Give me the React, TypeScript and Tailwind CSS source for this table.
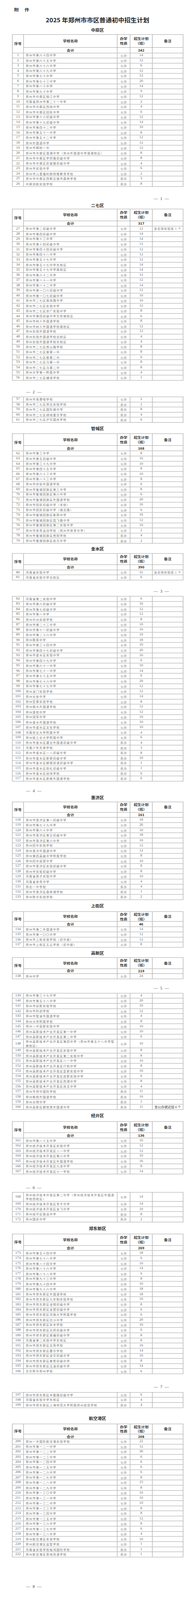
import React, { useLayoutEffect, useState } from "react";

type R = [number, string, string, string, string?];

const zy: R[] = [
  [1, "郑州市第六十四中学", "公办", "14"],
  [2, "郑州市第六十五中学", "公办", "12"],
  [3, "郑州市第六十六中学", "公办", "6"],
  [4, "郑州市第六十九中学", "公办", "12"],
  [5, "郑州市第七十中学", "公办", "12"],
  [6, "郑州市第七十三中学", "公办", "20"],
  [7, "郑州市第八十中学", "公办", "14"],
  [8, "郑州市第九十中学", "公办", "9"],
  [9, "郑州市中原区锦江中学", "公办", "12"],
  [10, "河南省郑州市第二十一中学", "公办", "2"],
  [11, "郑州市中原区西岗中学", "公办", "4"],
  [12, "郑州市中原区回民中学", "公办", "6"],
  [13, "郑州市第十六初级中学", "公办", "12"],
  [14, "郑州市第十九初级中学", "公办", "14"],
  [15, "郑州市第四十二中学", "公办", "10"],
  [16, "郑州市第五十一中学", "公办", "8"],
  [17, "郑州市第五十二中学", "公办", "12"],
  [18, "郑州外国语中学", "公办", "12"],
  [19, "郑州市桐柏一中", "公办", "12"],
  [20, "郑州市中原区莲湖中学（郑州外国语中学莲湖校区）", "公办", "8"],
  [21, "郑州市中原区学府路初级中学", "公办", "8"],
  [22, "郑州市中原区凯旋路初级中学", "公办", "4"],
  [23, "郑州市实验中学", "公办", "6"],
  [24, "郑州市儿童福利院特殊教育学校", "公办", "2"],
  [25, "郑州市中原区西斯达城市森林学校", "民办", "3"],
  [26, "中原领航实验学校", "民办", "8"],
];

const eq: R[] = [
  [27, "郑州市第二初级中学", "公办", "12", "含足球实验班 1 个"],
  [28, "郑州市第四初级中学", "公办", "14"],
  [29, "郑州市第十三中学", "公办", "14"],
  [30, "郑州市第十四初级中学", "公办", "12"],
  [31, "郑州市第四十四初级中学", "公办", "12"],
  [32, "郑州市第四十八中学", "公办", "12"],
  [33, "郑州市第五十七中学", "公办", "12"],
  [34, "郑州市第五十七中学东校区", "公办", "14"],
  [35, "郑州市第五十七中学南校区", "公办", "14"],
  [36, "郑州市第六十二中学", "公办", "12"],
  [37, "郑州市第八十一中学", "公办", "12"],
  [38, "郑州市第八十二中学", "公办", "14"],
  [39, "郑州市第一〇六初级中学", "公办", "12"],
  [40, "郑州市第一〇七初级中学", "公办", "10"],
  [41, "郑州市二七区南岗路中学", "公办", "10"],
  [42, "郑州市二七区实验中学", "公办", "12"],
  [43, "郑州市二七区京广实验中学", "公办", "8"],
  [44, "郑州市第四初级中学华侨城校区", "公办", "6"],
  [45, "郑州市树人外国语学校", "公办", "8"],
  [46, "郑州市树人外国语学校南校区", "公办", "12"],
  [47, "郑州实验外国语学校", "公办", "12"],
  [48, "郑州实验外国语学校北校区", "公办", "4"],
  [49, "郑州实验外国语学校东校区", "公办", "4"],
  [50, "郑州市二七区嵩山路学校", "公办", "8"],
  [51, "郑州市二七区侯寨一中", "公办", "8"],
  [52, "郑州市二七区侯寨二中", "公办", "6"],
  [53, "郑州市二七区马寨一中", "公办", "8"],
  [54, "郑州市二七区马寨二中", "公办", "8"],
  [55, "郑州大学第一附属中学", "公办", "4"],
  [56, "郑州市二七区辅读学校", "公办", "1"],
];

const eq2: R[] = [
  [57, "郑州市盲聋哑学校", "公办", "2"],
  [58, "郑州市二七区郑达实验学校", "民办", "2"],
  [59, "郑州市二七区国际城中学", "民办", "8"],
  [60, "郑州市二七区绿地爱华学校", "民办", "4"],
  [61, "郑州市二七区沪华国庆学校", "民办", "6"],
];

const gc: R[] = [
  [62, "郑州市第三中学", "公办", "8"],
  [63, "郑州市第五初级中学", "公办", "16"],
  [64, "郑州市第三十九中学", "公办", "10"],
  [65, "郑州市第四十五中学", "公办", "8"],
  [66, "郑州市第六十三中学", "公办", "10"],
  [67, "郑州市第八十三中学", "公办", "8"],
  [68, "郑州市扶轮外国语学校", "公办", "6"],
  [69, "郑州市管城回族区第三中学", "公办", "8"],
  [70, "郑州市管城回族区第六中学", "公办", "6"],
  [71, "郑州市管城回族区外国语学校", "公办", "20"],
  [72, "郑州市回民初级中学（本校）", "公办", "16"],
  [73, "郑州市回民初级中学（城北路）", "公办", "6"],
  [74, "郑州市管城回族区紫荆中学", "公办", "16"],
  [75, "郑州市管城回族区霞飞路中学", "公办", "12"],
  [76, "郑州市管城回族区第二实验中学", "公办", "10"],
  [77, "郑州市体育运动学校（郑州市体育中学）", "公办", "2"],
  [78, "郑州市管城回族区嵩阳学校", "民办", "4"],
  [79, "郑州市管城回族区启元中学", "民办", "2"],
];

const js: R[] = [
  [80, "河南省实验中学", "公办", "31", "含足球实验班 1 个"],
  [81, "河南省实验中学北校区", "公办", "6"],
];

const js2: R[] = [
  [82, "河南省第二实验中学", "公办", "6"],
  [83, "郑州市第六初级中学", "公办", "16"],
  [84, "郑州市第七初级中学", "公办", "12"],
  [85, "郑州市第八中学", "公办", "12"],
  [86, "郑州中州实验学校", "公办", "8"],
  [87, "郑州市第二十三中学", "公办", "10"],
  [88, "郑州市第十一初级中学", "公办", "10"],
  [89, "郑州市第二十六中学", "公办", "10"],
  [90, "郑州群英中学", "公办", "18"],
  [91, "郑州市第三十四中学", "公办", "10"],
  [92, "郑州市第四十七初级中学", "公办", "20"],
  [93, "郑州市金水区实验中学", "公办", "16"],
  [94, "郑州市第四十九中学", "公办", "6"],
  [95, "郑州市第六十一中学", "公办", "10"],
  [96, "郑州市第七十一中学", "公办", "14"],
  [97, "郑州市第七十五中学", "公办", "6"],
  [98, "郑州市第七十六中学", "公办", "20"],
  [99, "郑州市第七十七中学", "公办", "12"],
  [100, "郑州龙门实验学校", "公办", "12"],
  [101, "郑州长安中学", "公办", "14"],
  [102, "郑州宏泰实验学校", "公办", "8"],
  [103, "郑州丽水外国语学校", "公办", "12"],
  [104, "郑州金桂中学", "公办", "12"],
  [105, "郑州冠军中学", "公办", "10"],
  [106, "郑州金水外国语学校", "公办", "10"],
  [107, "郑州市金水区文化学校", "公办", "10"],
  [108, "河南农业大学附属中学", "公办", "4"],
  [109, "郑州轻工业大学附属中学", "公办", "6"],
  [110, "郑州市金水区建业外国语初级中学", "民办", "4"],
  [111, "河南少年先锋学校", "民办", "3"],
  [112, "郑州市金水区一八初级中学", "民办", "8"],
  [113, "郑州市金水区新奇初级中学", "民办", "10"],
  [114, "郑州市金水区朗德双语初级中学", "民办", "1"],
  [115, "郑州市金水区勤礼初级中学", "民办", "1"],
  [116, "郑州市金水区经纬学校", "民办", "6"],
  [117, "郑州市金水区新枫外国语学校", "民办", "6"],
];

const hj: R[] = [
  [118, "郑州市惠济区第一初级中学", "公办", "18"],
  [119, "郑州市第七十九中学", "公办", "26"],
  [120, "郑州市第六十中学", "公办", "10"],
  [121, "郑州市惠济区第五初级中学", "公办", "18"],
  [122, "郑州市惠济区第六中学", "公办", "10"],
  [123, "郑州四中实验学校", "公办", "12"],
  [124, "郑州惠济外国语中学", "公办", "12"],
  [125, "郑州第四高级中学附属学校", "公办", "8"],
  [126, "郑州四中迎宾中学", "公办", "10"],
  [127, "郑州市惠济区实验初级中学", "公办", "8"],
  [128, "郑州市实验初级中学", "公办", "8"],
  [129, "河南省英才实验中学", "公办", "10"],
  [130, "河南省体育中学", "公办", "4"],
  [131, "郑北一中学校", "民办", "4"],
  [132, "郑州市惠济区森林湖学校", "民办", "1"],
  [133, "郑州陈中实验学校", "民办", "2"],
];

const sj: R[] = [
  [134, "郑州市第二外国语中学", "公办", "14"],
  [135, "郑州市第一〇〇中学", "公办", "12"],
  [136, "郑州市上街实验学校（初中部）", "公办", "12"],
  [137, "郑州市上街区五云学校（初中部）", "公办", "8"],
];

const gx: R[] = [[138, "郑州中学", "公办", "24"]];

const gx2: R[] = [
  [139, "郑州市第三十七中学", "公办", "4"],
  [140, "郑州市第五十八中学", "公办", "20"],
  [141, "郑州市创新实验学校", "公办", "10"],
  [142, "郑州市科创学校", "公办", "12"],
  [143, "郑州市智途外国语学校", "公办", "4"],
  [144, "郑州大学附属学校", "公办", "8"],
  [145, "郑州一中高新实验中学", "公办", "10"],
  [146, "郑州高新技术产业开发区第一中学", "公办", "10"],
  [147, "郑州高新技术产业开发区第二中学", "公办", "6"],
  [148, "郑州高新技术产业开发区第四中学（郑州市第五十八中学智\n美校区）", "公办", "10"],
  [149, "郑州高新技术产业开发区实验中学", "公办", "8"],
  [150, "郑州高新技术产业开发区第二实验中学", "公办", "8"],
  [151, "郑州高新技术产业开发区八一中学", "公办", "16"],
  [152, "郑州高新技术产业开发区行知中学", "公办", "8"],
  [153, "郑州高新技术产业开发区复新实验中学", "公办", "10"],
  [154, "郑州高新技术产业开发区启新实验中学", "公办", "6"],
  [155, "郑州高新技术产业开发区西湖中学", "公办", "8"],
  [156, "郑州高新技术产业开发区尚文中学", "公办", "4"],
  [157, "郑州市郑中国际学校", "民办", "11"],
  [158, "郑州枫杨外国语学校", "民办", "10"],
  [159, "郑州长明中学", "民办", "1"],
  [160, "郑州高新区朗悦慧外国语中学", "民办", "11", "含公办就近班 6 个"],
];

const jk: R[] = [
  [161, "郑州市第八十五中学", "公办", "16"],
  [162, "郑州经济技术开发区实验中学", "公办", "12"],
  [163, "郑州经济技术开发区八一中学", "公办", "12"],
  [164, "郑州经济技术开发区第六中学", "公办", "10"],
  [165, "郑州经济技术开发区外国语学校", "公办", "16"],
  [166, "郑州经济技术开发区九龙中学", "公办", "8"],
  [167, "郑州经济技术开发区十一学校", "公办", "14"],
];

const jk2: R[] = [
  [168, "郑州经济技术开发区第二中学（郑州经济技术开发区外国语\n学校西校区）", "公办", "14"],
  [169, "郑州经济技术开发区育才中学", "公办", "14"],
  [170, "郑州经济技术开发区龙飞中学", "公办", "10"],
  [171, "郑州经开区致远中学", "民办", "8"],
  [172, "郑州国庆中学", "民办", "2"],
];

const zd: R[] = [
  [173, "郑州市第五十四中学", "公办", "18"],
  [174, "郑州市第七十八中学", "公办", "6"],
  [175, "郑州市第八十四中学", "公办", "10"],
  [176, "郑州市第八十六中学", "公办", "14"],
  [177, "郑州市第八十八中学", "公办", "9"],
  [178, "郑州市第九十三中学", "公办", "8"],
  [179, "郑州市第九十四中学", "公办", "10"],
  [180, "郑州市第九十六中学", "公办", "18"],
  [181, "郑州市郑东新区外国语学校", "公办", "18"],
  [182, "郑州市郑东新区九年制实验学校", "公办", "10"],
  [183, "郑州市郑东新区龙翔初级中学", "公办", "8"],
  [184, "郑州市郑东新区龙翼初级中学", "公办", "6"],
  [185, "郑州市郑东新区河南大学附属学校", "公办", "6"],
  [186, "郑州市郑东新区白沙中学", "公办", "20"],
  [187, "郑州市郑东新区永丰学校", "公办", "10"],
  [188, "郑州市郑东新区天府初级中学", "公办", "6"],
  [189, "郑州市郑东新区南塘初级中学", "公办", "8"],
  [190, "河南省第二实验中学东校区", "公办", "8"],
  [191, "郑州市郑东新区文苑学校", "公办", "10"],
  [192, "郑州市郑东新区春华学校", "公办", "14"],
  [193, "郑州市郑东新区龙华初级中学", "公办", "10"],
  [194, "郑州市郑东新区美秀初级中学", "公办", "8"],
  [195, "郑州市郑东新区玉溪初级中学", "公办", "14"],
  [196, "清华附中郑州学校", "公办", "6"],
];

const zd2: R[] = [
  [197, "郑州市郑东新区丰盈路初级中学", "公办", "6"],
  [198, "河南省实验中学东校区", "公办", "4"],
  [199, "郑州市郑东新区上海师范大学附属郑州启佳学校", "民办", "4"],
];

const hk: R[] = [
  [200, "郑州一中国际航空港实验学校", "公办", "22"],
  [201, "郑州市第一二一中学", "公办", "12"],
  [202, "郑州市第一二二中学", "公办", "30"],
  [203, "郑州市第一二三中学", "公办", "6"],
  [204, "郑州市第一二四中学", "公办", "6"],
  [205, "郑州市第一二五中学", "公办", "6"],
  [206, "郑州市第一二六中学", "公办", "6"],
  [207, "郑州市第一二七中学", "公办", "8"],
  [208, "郑州市第一二八中学", "公办", "15"],
  [209, "郑州市第一二九中学", "公办", "8"],
  [210, "郑州市第一三〇中学", "公办", "10"],
  [211, "郑州市第一三一中学", "公办", "10"],
  [212, "郑州市第一三二中学", "公办", "10"],
  [213, "郑州市第一三三中学", "公办", "8"],
  [214, "郑州市第一三四中学", "公办", "8"],
  [215, "郑州市第一三五中学", "公办", "12"],
  [216, "郑州市第一三六中学", "公办", "8"],
  [217, "郑州市第一三七中学", "公办", "6"],
  [218, "郑州市第一三八中学", "公办", "4"],
  [219, "郑州航空港区实验学校", "公办", "10"],
  [220, "郑州航空港区益智学校", "公办", "1"],
  [221, "河南省实验学校裕鸿国际学校", "民办", "1"],
  [222, "郑州航空港区英地双语学校", "民办", "1"],
];

function DataRow({ r, h = "h-[14.67px]" }: { r: R; h?: string }) {
  const [n, name, type, num, note] = r;
  const lines = name.split("\n");
  return (
    <div className={`flex shrink-0 overflow-hidden border-b border-[#969696] ${h}`}>
      <div className="w-[29px] shrink-0 border-r border-[#969696] flex items-center justify-center font-['Liberation_Serif',serif] text-[9.5px] leading-none text-[#666]">
        {n}
      </div>
      <div className="w-[240px] shrink-0 border-r border-[#969696] flex flex-col justify-center pl-[5px] font-['Noto_Sans_CJK_SC',sans-serif] text-[7.5px] leading-[12px] tracking-[1.25px] text-[#747474]">
        {lines.map((l, i) => (
          <span key={i} className="whitespace-nowrap">
            {l}
          </span>
        ))}
      </div>
      <div className="w-[33px] shrink-0 border-r border-[#969696] flex items-center justify-center pl-[1px] font-['Noto_Sans_CJK_SC',sans-serif] text-[7.5px] leading-none tracking-[1px] text-[#747474]">
        {type}
      </div>
      <div className="w-[57px] shrink-0 border-r border-[#969696] flex items-center justify-center font-['Liberation_Serif',serif] text-[9.5px] leading-none text-[#666]">
        {num}
      </div>
      <div className="flex-1 flex items-center justify-center">
        {note &&
          (note.startsWith("含公办") ? (
            <span className="whitespace-nowrap font-['Noto_Sans_CJK_SC',sans-serif] text-[8.5px] leading-none text-[#333]">
              {note}
            </span>
          ) : (
            <span className="whitespace-nowrap font-['Noto_Sans_CJK_SC',sans-serif] text-[7.5px] leading-none tracking-[1px] text-[#747474]">
              {note}
            </span>
          ))}
      </div>
    </div>
  );
}

function Header({ h1, h2, total }: { h1: string; h2: string; total: string }) {
  return (
    <div className="flex border-b border-[#969696] font-['Noto_Sans_CJK_SC',sans-serif] font-bold text-[#333]">
      <div className="w-[29px] shrink-0 border-r border-[#969696] flex items-center justify-center text-[9.5px] leading-none">
        序号
      </div>
      <div className="flex-1 flex flex-col">
        <div className={`flex overflow-hidden border-b border-[#969696] ${h1}`}>
          <div className="w-[240px] shrink-0 border-r border-[#969696] flex items-center justify-center text-[9.5px] leading-none">
            学校名称
          </div>
          <div className="w-[33px] shrink-0 border-r border-[#969696] flex flex-col items-center justify-center text-[9.5px] leading-[13px]">
            <span>办学</span>
            <span>性质</span>
          </div>
          <div className="w-[57px] shrink-0 border-r border-[#969696] flex flex-col items-center justify-center text-[9.5px] leading-[13px]">
            <span>招生计划</span>
            <span>（班）</span>
          </div>
          <div className="flex-1 flex items-center justify-center text-[9.5px] leading-none">备注</div>
        </div>
        <div className={`flex overflow-hidden ${h2}`}>
          <div className="w-[240px] shrink-0 border-r border-[#969696] flex items-center justify-center text-[9.5px] leading-none">
            合计
          </div>
          <div className="w-[33px] shrink-0 border-r border-[#969696]" />
          <div className="w-[57px] shrink-0 border-r border-[#969696] flex items-center justify-center text-[9px] leading-none text-[#222]">
            {total}
          </div>
          <div className="flex-1" />
        </div>
      </div>
    </div>
  );
}

function Table({
  className,
  h1,
  h2,
  total,
  rows,
  tall,
}: {
  className: string;
  h1?: string;
  h2?: string;
  total?: string;
  rows: R[];
  tall?: Record<number, string>;
}) {
  return (
    <div className={`ml-[31px] w-[439px] shrink-0 border-x border-t border-[#969696] ${className}`}>
      {h1 && h2 && total && <Header h1={h1} h2={h2} total={total} />}
      {rows.map((r) => (
        <DataRow key={r[0]} r={r} h={tall && tall[r[0]] ? tall[r[0]] : "h-[14.67px]"} />
      ))}
    </div>
  );
}

function District({ name, className }: { name: string; className: string }) {
  return (
    <div
      className={`h-[14px] shrink-0 overflow-hidden text-center font-['Noto_Sans_CJK_SC',sans-serif] text-[11px] font-bold leading-[14px] text-[#222] ${className}`}
    >
      {name}
    </div>
  );
}

function PageNum({ n, right, className }: { n: string; right?: boolean; className: string }) {
  return (
    <div
      className={`flex h-[14px] shrink-0 items-center ${right ? "justify-end pr-[66.7px]" : "justify-start pl-[66.7px]"} ${className}`}
    >
      <div className="flex items-center gap-[6px] font-['Liberation_Serif',serif] text-[11px] leading-none text-[#444]">
        <span>—</span>
        <span>{n}</span>
        <span>—</span>
      </div>
    </div>
  );
}

const PAGE_H = 4566;

function useFit() {
  const [k, setK] = useState(1);
  useLayoutEffect(() => {
    const measure = () => {
      const cands = [window.innerHeight, document.documentElement.clientHeight];
      if (window.visualViewport) cands.push(window.visualViewport.height);
      const h = Math.min(...cands.filter((v) => v > 0));
      setK(h > 0 && h < PAGE_H ? h / PAGE_H : 1);
    };
    measure();
    window.addEventListener("resize", measure);
    return () => window.removeEventListener("resize", measure);
  }, []);
  return k;
}

export default function App() {
  const k = useFit();
  return (
    <div className="w-[500px] overflow-hidden bg-white" style={{ height: PAGE_H * k }}>
      <div
        className="flex h-[4566px] w-[500px] origin-top-left flex-col bg-white"
        style={{ transform: `scaleY(${k})` }}
      >
        <div className="mt-[19px] h-[16px] shrink-0 pl-[36px] font-['Noto_Sans_CJK_SC',sans-serif] text-[12px] font-bold leading-[16px] tracking-[15px] text-[#333]">
          附件
        </div>
        <div className="mt-[10.7px] h-[20px] shrink-0 text-center font-['Noto_Sans_CJK_SC',sans-serif] text-[16px] font-bold leading-[20px] text-[#222]">
          2025 年郑州市市区普通初中招生计划
        </div>

        <District name="中原区" className="mt-[12.3px]" />
        <Table className="mt-[5.7px]" h1="h-[37.3px]" h2="h-[14.7px]" total="242" rows={zy} />
        <PageNum n="1" right className="mt-[28.2px]" />

        <District name="二七区" className="mt-[4.4px]" />
        <Table className="mt-[3px]" h1="h-[33.3px]" h2="h-[14.7px]" total="317" rows={eq} />
        <PageNum n="2" className="mt-[25.2px]" />
        <Table className="mt-[6.7px]" rows={eq2} />

        <District name="管城区" className="mt-[8.6px]" />
        <Table className="mt-[8.6px]" h1="h-[34px]" h2="h-[14px]" total="168" rows={gc} />

        <District name="金水区" className="mt-[7.4px]" />
        <Table className="mt-[6.3px]" h1="h-[32.3px]" h2="h-[13.4px]" total="390" rows={js} />
        <PageNum n="3" right className="mt-[25px]" />
        <Table className="mt-[6.6px]" rows={js2} />
        <PageNum n="4" className="mt-[20.2px]" />

        <District name="惠济区" className="mt-[5px]" />
        <Table className="mt-[4.3px]" h1="h-[30.4px]" h2="h-[13.3px]" total="161" rows={hj} />

        <District name="上街区" className="mt-[10px]" />
        <Table className="mt-[9px]" h1="h-[28.6px]" h2="h-[14px]" total="46" rows={sj} />

        <District name="高新区" className="mt-[7.7px]" />
        <Table className="mt-[6.3px]" h1="h-[31.7px]" h2="h-[13.3px]" total="219" rows={gx} />
        <PageNum n="5" right className="mt-[19.6px]" />
        <Table className="mt-[6.4px]" rows={gx2} tall={{ 148: "h-[24.7px]" }} />

        <District name="经开区" className="mt-[9.3px]" />
        <Table className="mt-[10px]" h1="h-[32px]" h2="h-[14px]" total="136" rows={jk} />
        <PageNum n="6" className="mt-[31.3px]" />
        <Table className="mt-[6.3px]" rows={jk2} tall={{ 168: "h-[25.7px]" }} />

        <District name="郑东新区" className="mt-[9.9px]" />
        <Table className="mt-[9px]" h1="h-[33px]" h2="h-[13.7px]" total="269" rows={zd} />
        <PageNum n="7" right className="mt-[30.6px]" />
        <Table className="mt-[7px]" rows={zd2} />

        <District name="航空港区" className="mt-[22.3px]" />
        <Table className="mt-[9px]" h1="h-[28.7px]" h2="h-[13.3px]" total="208" rows={hk} />
        <PageNum n="8" className="mt-[77.3px]" />
      </div>
    </div>
  );
}
